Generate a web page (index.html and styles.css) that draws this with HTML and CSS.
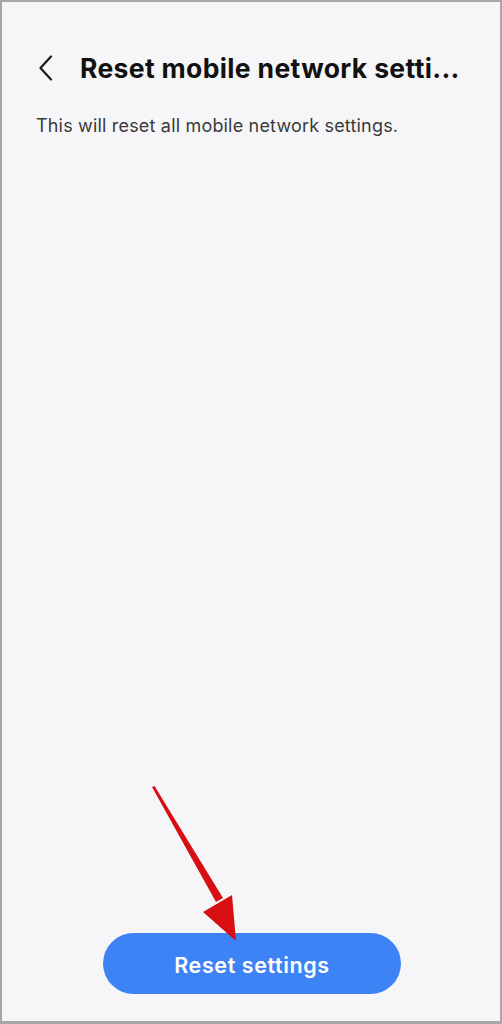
FILE: index.html
```html
<!DOCTYPE html>
<html lang="en">
<head>
<meta charset="utf-8">
<title>Reset mobile network settings</title>
<link rel="stylesheet" href="styles.css">
</head>
<body>
<div class="screen">
  <header class="appbar">
    <span class="back" aria-label="Back">
      <svg width="16" height="26" viewBox="0 0 16 26"><path d="M13 1.5 L2.5 13 L13 24.5" fill="none" stroke="#1a1a1a" stroke-width="2.2" stroke-linecap="round" stroke-linejoin="round"/></svg>
    </span>
    <h1 class="title">Reset mobile network setti...</h1>
  </header>
  <p class="desc">This will reset all mobile network settings.</p>
  <div class="spacer"></div>
  <div class="actions">
    <button class="primary">Reset settings</button>
  </div>
  <svg class="annot" width="502" height="1024" viewBox="0 0 502 1024">
    <path d="M152 787 L154.5 786 L223 898 L216 902 Z" fill="#d80f12"/>
    <path d="M203 912 L232 895 L236 941 Z" fill="#d80f12"/>
  </svg>
</div>
</body>
</html>
```
FILE: styles.css
```css
html, body {
  margin: 0;
  padding: 0;
}
body {
  background: #f6f6f8;
  font-family: Inter, Roboto, "Noto Sans", sans-serif;
}
.screen {
  position: relative;
  box-sizing: border-box;
  width: 502px;
  height: 1024px;
  border: 2px solid #a7a7a7;
  border-bottom-width: 3px;
  background: #f6f6f8;
  display: flex;
  flex-direction: column;
}
.appbar {
  display: flex;
  align-items: center;
  padding: 50px 0 0 36px;
  height: 32px;
}
.back {
  display: flex;
  width: 16px;
  height: 26px;
  margin-right: 26px;
}
.title {
  margin: 0;
  font-size: 26.5px;
  font-weight: 700;
  color: #111;
  letter-spacing: 0.35px;
  white-space: nowrap;
}
.desc {
  margin: 30px 0 0 34px;
  font-size: 18px;
  color: #3a3a3a;
  line-height: 24px;
  letter-spacing: 0.18px;
}
.spacer {
  flex: 1;
}
.actions {
  display: flex;
  justify-content: center;
  padding: 0 0 27px 2px;
}
.primary {
  width: 298px;
  height: 61px;
  border: none;
  border-radius: 31px;
  background: #3e83f6;
  color: #fff;
  font-family: Inter, Roboto, sans-serif;
  font-size: 21.5px;
  font-weight: 600;
  letter-spacing: 0.6px;
  padding-top: 3px;
}
.annot {
  position: absolute;
  left: -2px;
  top: -2px;
  pointer-events: none;
}
```
